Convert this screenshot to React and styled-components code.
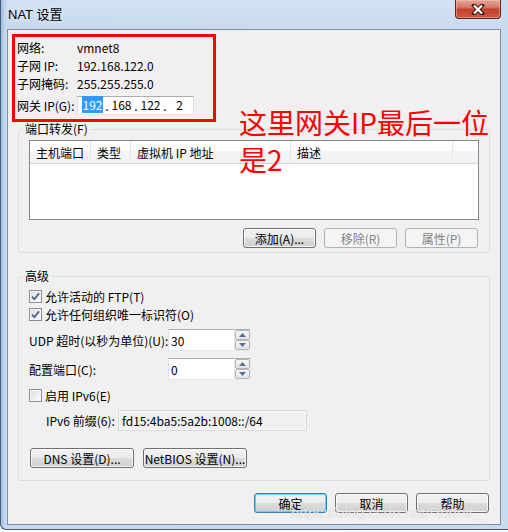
import React from 'react';
import styled, { createGlobalStyle, css } from 'styled-components';

const GlobalStyle = createGlobalStyle`
  html, body { margin: 0; padding: 0; background: #ffffff; }
  body {
    font-family: "Noto Sans CJK SC", "Liberation Sans", sans-serif;
    font-size: 12px;
    line-height: 15px;
    color: #000;
  }
  * { box-sizing: border-box; }
`;

const Window = styled.div`
  position: relative;
  width: 508px;
  height: 530px;
  display: flex;
  flex-direction: column;
  padding: 0 7px 4px 6px;
  background: linear-gradient(90deg, #9dbde3 0px, #c4d8ee 4px, #c9dbef 100%);
  border-left: 1px solid #4a5a70;
  border-bottom: 1px solid #4a5a70;
  border-bottom-left-radius: 6px;
  overflow: hidden;
`;

const TitleBar = styled.div`
  height: 29px;
  flex-shrink: 0;
  display: flex;
  justify-content: space-between;
  background: linear-gradient(180deg, rgba(220, 232, 245, 0.6), rgba(200, 218, 238, 0.2));
`;

const Title = styled.div`
  padding: 7px 0 0 1px;
  font-family: "Liberation Sans", "Noto Sans CJK SC", sans-serif;
  font-size: 13px;
  line-height: 15px;
  text-shadow: 0 0 6px rgba(255, 255, 255, 0.9);
`;

const CloseButton = styled.div`
  width: 46px;
  height: 19px;
  display: flex;
  align-items: center;
  justify-content: center;
  border: 1px solid #5a2820;
  border-top: none;
  border-radius: 0 0 4px 4px;
  background: linear-gradient(180deg, #e4a597 0%, #d77a66 40%, #c2412c 52%, #cf5a40 100%);
  box-shadow: inset 0 0 0 1px rgba(255, 200, 190, 0.45);
`;

const Client = styled.div`
  flex: 1;
  position: relative;
  display: flex;
  flex-direction: column;
  background: #f0f0f0;
  border: 1px solid #808fa2;
`;

const InfoBox = styled.div`
  margin: 4px 0 0 4px;
  width: 204px;
  height: 88px;
  padding: 1px 0 0 2px;
  border: 3px solid #ff0000;
  display: grid;
  grid-template-columns: 60px auto;
  grid-template-rows: 18px 18px 18px 26px;
  align-items: center;
`;

const IpBox = styled.div`
  width: 117px;
  height: 19px;
  display: flex;
  align-items: center;
  padding-left: 3px;
  background: #fff;
  border: 1px solid;
  border-color: #abadb3 #dbdfe6 #e3e9ef #e2e3ea;
`;

const Octet = styled.span`
  width: 23px;
  text-align: center;
  line-height: 14px;
`;

const Selected = styled.span`
  background: #3399ff;
  color: #fff;
  padding: 0 1px;
`;

const Dot = styled.span`
  width: 6px;
  text-align: center;
`;

const Annotation = styled.div`
  position: absolute;
  left: 231px;
  top: 74px;
  font-size: 28px;
  line-height: 37px;
  color: #ff0000;
  pointer-events: none;
`;

const Group = styled.fieldset`
  margin: ${(p) => p.$top || 0}px 0 0 10px;
  width: 472px;
  min-inline-size: 0;
  padding: ${(p) => p.$padTop}px 10px ${(p) => p.$padBottom}px;
  border: 1px solid #d5dfe5;
  border-radius: 3px;
`;

const Legend = styled.legend`
  margin-left: -6px;
  padding: 0 2px;
  line-height: 14px;
`;

const ListView = styled.div`
  height: 80px;
  background: #fff;
  border: 1px solid #828790;
`;

const ListHeader = styled.div`
  display: flex;
  height: 23px;
  border-bottom: 1px solid #d5d5d5;
  background: linear-gradient(180deg, #ffffff 0%, #ffffff 45%, #f3f4f6 46%, #f1f2f4 100%);
`;

const HeaderCell = styled.div`
  width: ${(p) => p.$w}px;
  padding-left: 6px;
  display: flex;
  align-items: center;
  border-right: 1px solid #e3e6ea;
  box-shadow: 1px 0 0 #fbfbfb;
`;

const ButtonRow = styled.div`
  display: flex;
  justify-content: ${(p) => p.$align || 'flex-end'};
  gap: ${(p) => p.$gap || 8}px;
  margin-top: ${(p) => p.$top || 0}px;
  padding: 0 ${(p) => p.$right || 0}px 0 ${(p) => p.$left || 0}px;
`;

const Button = styled.button`
  width: ${(p) => p.$w}px;
  height: 20px;
  padding: 0;
  font: inherit;
  color: #000;
  border: 1px solid #707070;
  border-radius: 3px;
  background: linear-gradient(180deg, #f2f2f2 0%, #ebebeb 48%, #dddddd 50%, #cfcfcf 100%);
  box-shadow: inset 0 0 0 1px rgba(255, 255, 255, 0.75);
  ${(p) =>
    p.disabled &&
    css`
      color: #838383;
      border-color: #adb2b5;
      background: #f4f4f4;
      box-shadow: none;
    `}
  ${(p) =>
    p.$primary &&
    css`
      border-color: #3c7fb1;
      box-shadow: inset 0 0 0 1px #5fd3f7;
    `}
`;

const CheckRow = styled.div`
  height: 18px;
  display: flex;
  align-items: center;
  gap: 3px;
  margin-top: ${(p) => p.$top || 0}px;
`;

const CheckBox = styled.span`
  width: 13px;
  height: 13px;
  display: flex;
  align-items: center;
  justify-content: center;
  border: 1px solid #8e8f8f;
  background: linear-gradient(135deg, #d8d8d8 0%, #f4f4f4 70%, #ffffff 100%);
  box-shadow: inset 0 0 0 1px #f6f6f6;
`;

const FieldRow = styled.div`
  display: flex;
  align-items: center;
  margin-top: ${(p) => p.$top}px;
  padding-left: ${(p) => p.$indent || 0}px;
`;

const FieldLabel = styled.span`
  width: ${(p) => p.$w}px;
  flex-shrink: 0;
  white-space: nowrap;
`;

const Spin = styled.div`
  width: 83px;
  height: 22px;
  display: flex;
`;

const SpinText = styled.div`
  flex: 1;
  display: flex;
  align-items: center;
  padding-left: 2px;
  background: #fff;
  border: 1px solid;
  border-color: #abadb3 #dbdfe6 #e3e9ef #e2e3ea;
  border-right: none;
`;

const SpinButtons = styled.div`
  width: 17px;
  display: flex;
  flex-direction: column;
  border: 1px solid;
  border-color: #abadb3 #e3e9ef #e3e9ef #e3e9ef;
  background: #fff;
`;

const SpinButton = styled.div`
  flex: 1;
  display: flex;
  align-items: center;
  justify-content: center;
  border: 1px solid #b6b6b6;
  border-radius: 2px;
  background: linear-gradient(180deg, #f6f6f6, #e3e3e3);
`;

const PrefixField = styled.div`
  width: 189px;
  height: 21px;
  display: flex;
  align-items: center;
  padding-left: 3px;
  border: 1px solid #dadada;
  background: #f0f0f0;
  box-shadow: inset 0 0 0 1px #f8f8f8;
`;

const Watermark = styled.div`
  position: absolute;
  left: 290px;
  top: 504px;
  font-family: "Liberation Sans", sans-serif;
  font-size: 15px;
  line-height: 18px;
  color: rgba(255, 255, 255, 0.8);
  text-shadow: 0 0 1px rgba(0, 0, 0, 0.25);
  pointer-events: none;
`;

const Check = () => (
  <CheckBox>
    <svg width="9" height="9" viewBox="0 0 9 9">
      <path d="M1 4.6 L3.4 7.2 L8 1.4" fill="none" stroke="#4b5f8c" strokeWidth="1.7" />
    </svg>
  </CheckBox>
);

const Arrow = ({ up }) => (
  <svg width="7" height="4" viewBox="0 0 7 4">
    <polygon points={up ? '3.5,0 7,4 0,4' : '0,0 7,0 3.5,4'} fill="#56709a" />
  </svg>
);

const SpinInput = ({ value }) => (
  <Spin>
    <SpinText>{value}</SpinText>
    <SpinButtons>
      <SpinButton><Arrow up /></SpinButton>
      <SpinButton><Arrow /></SpinButton>
    </SpinButtons>
  </Spin>
);

const App = () => {
  return (
    <>
      <GlobalStyle />
      <Window>
        <TitleBar>
          <Title>NAT 设置</Title>
          <CloseButton>
            <svg width="14" height="11" viewBox="0 0 14 11">
              <path d="M3 1.5 L11 9.5 M11 1.5 L3 9.5" stroke="#3a1510" strokeWidth="4" strokeLinecap="square" />
              <path d="M3 1.5 L11 9.5 M11 1.5 L3 9.5" stroke="#ffffff" strokeWidth="2.2" />
            </svg>
          </CloseButton>
        </TitleBar>

        <Client>
          <InfoBox>
            <span>网络:</span>
            <span>vmnet8</span>
            <span>子网 IP:</span>
            <span>192.168.122.0</span>
            <span>子网掩码:</span>
            <span>255.255.255.0</span>
            <span>网关 IP(G):</span>
            <IpBox>
              <Octet><Selected>192</Selected></Octet>
              <Dot>.</Dot>
              <Octet>168</Octet>
              <Dot>.</Dot>
              <Octet>122</Octet>
              <Dot>.</Dot>
              <Octet>2</Octet>
            </IpBox>
          </InfoBox>

          <Annotation>
            这里网关IP最后一位
            <br />
            是2
          </Annotation>

          <Group $padTop={4} $padBottom={4}>
            <Legend>端口转发(F)</Legend>
            <ListView>
              <ListHeader>
                <HeaderCell $w={61}>主机端口</HeaderCell>
                <HeaderCell $w={40}>类型</HeaderCell>
                <HeaderCell $w={160}>虚拟机 IP 地址</HeaderCell>
                <HeaderCell $w={162}>描述</HeaderCell>
              </ListHeader>
            </ListView>
            <ButtonRow $top={8} $right={1}>
              <Button $w={73}>添加(A)...</Button>
              <Button $w={73} disabled>移除(R)</Button>
              <Button $w={73} disabled>属性(P)</Button>
            </ButtonRow>
          </Group>

          <Group $top={16} $padTop={4} $padBottom={12}>
            <Legend>高级</Legend>
            <CheckRow>
              <Check />
              <span>允许活动的 FTP(T)</span>
            </CheckRow>
            <CheckRow>
              <Check />
              <span>允许任何组织唯一标识符(O)</span>
            </CheckRow>
            <FieldRow $top={6}>
              <FieldLabel $w={139}>UDP 超时(以秒为单位)(U):</FieldLabel>
              <SpinInput value="30" />
            </FieldRow>
            <FieldRow $top={7}>
              <FieldLabel $w={139}>配置端口(C):</FieldLabel>
              <SpinInput value="0" />
            </FieldRow>
            <CheckRow $top={6}>
              <CheckBox />
              <span>启用 IPv6(E)</span>
            </CheckRow>
            <FieldRow $top={6} $indent={17}>
              <FieldLabel $w={72}>IPv6 前缀(6):</FieldLabel>
              <PrefixField>fd15:4ba5:5a2b:1008::/64</PrefixField>
            </FieldRow>
            <ButtonRow $top={17} $left={1} $gap={9} $align="flex-start">
              <Button $w={104}>DNS 设置(D)...</Button>
              <Button $w={104}>NetBIOS 设置(N)...</Button>
            </ButtonRow>
          </Group>

          <ButtonRow $top={12} $right={11}>
            <Button $w={73} $primary>确定</Button>
            <Button $w={73}>取消</Button>
            <Button $w={73}>帮助</Button>
          </ButtonRow>
        </Client>

        <Watermark>https://blog.csdn.net/Rudolf__</Watermark>
      </Window>
    </>
  );
};

export default App;
